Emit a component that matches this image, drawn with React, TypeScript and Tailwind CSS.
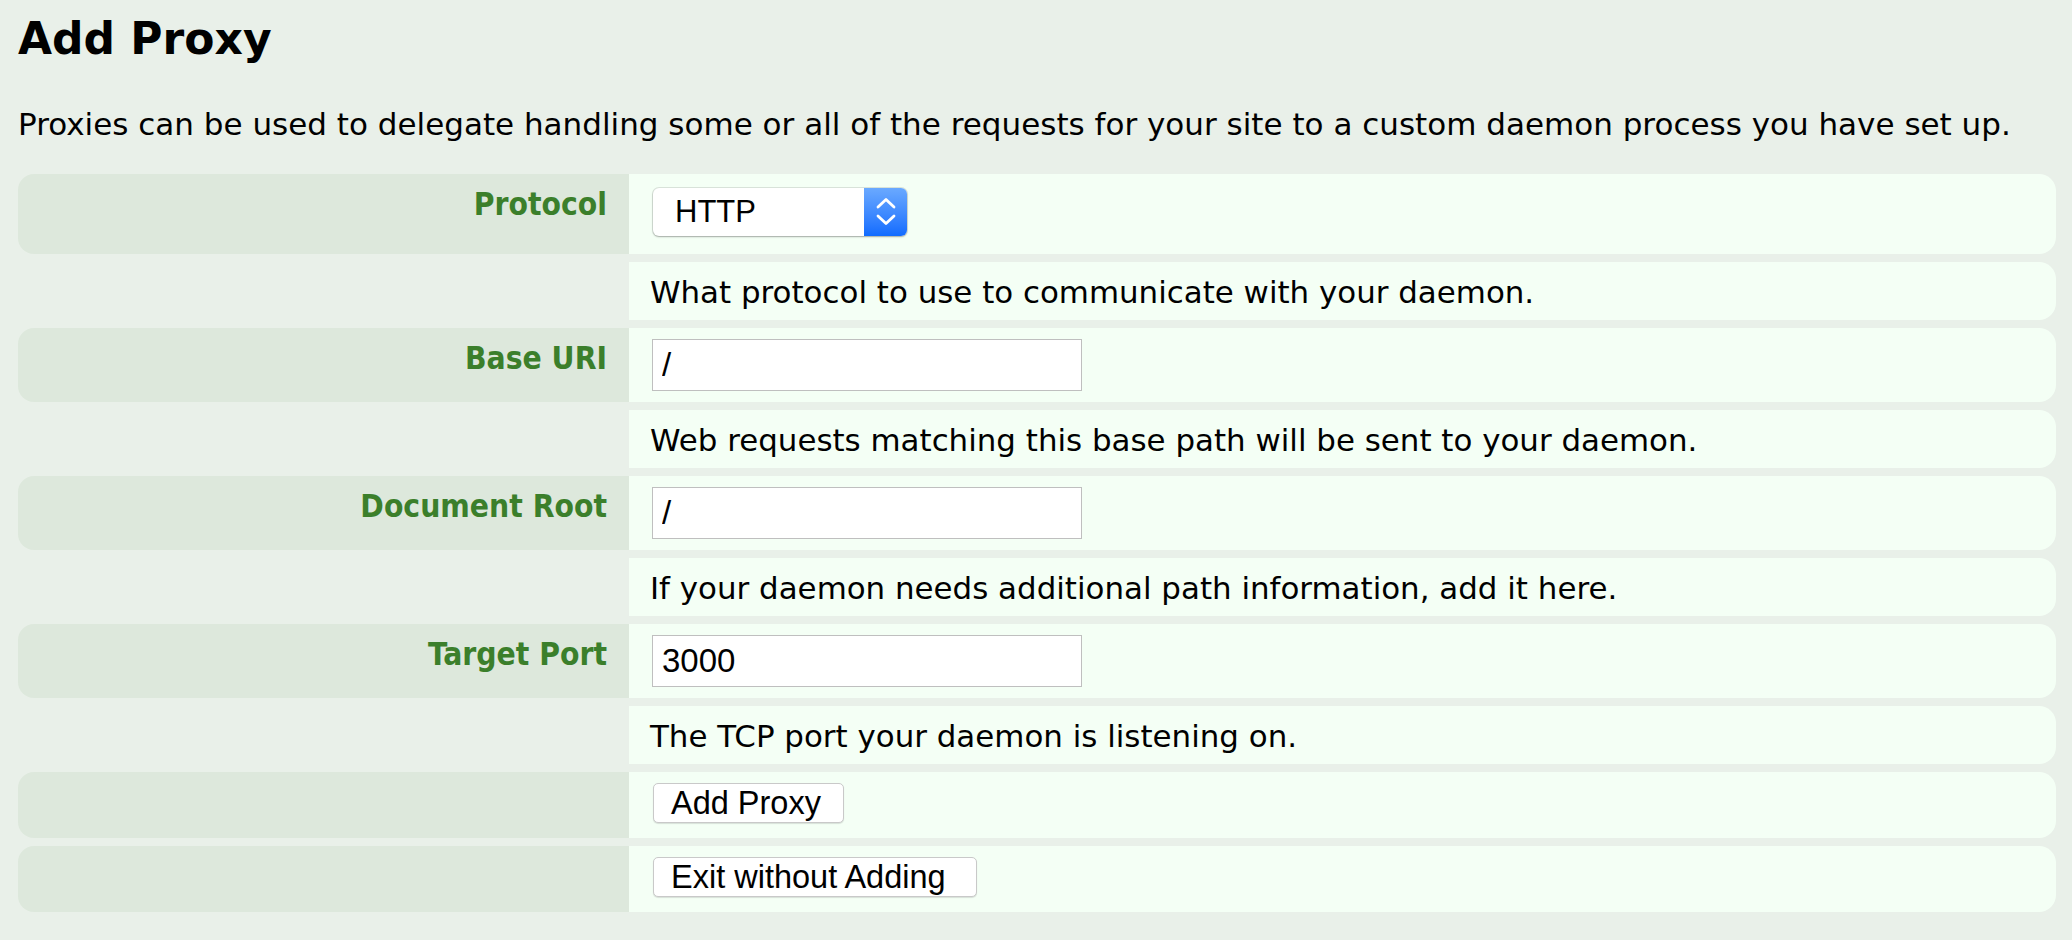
import React from "react";

function LabelCell({ label }: { label?: string }) {
  if (!label && label !== "") {
    return <div className="w-[611px] shrink-0" />;
  }
  return (
    <div className="w-[611px] shrink-0 rounded-l-[16px] bg-[#dde8dc] pr-[22px] pt-[12px] text-right font-['DejaVu_Sans_Condensed','DejaVu_Sans',sans-serif] text-[31.5px] font-bold leading-[36px] text-[#3b7f2b] [font-stretch:condensed]">
      {label}
    </div>
  );
}

function ValueCell({ children, pt }: { children: React.ReactNode; pt: string }) {
  return <div className={`flex-1 rounded-r-[17px] bg-[#f4fff5] pl-[21px] ${pt}`}>{children}</div>;
}

function DescRow({ text }: { text: string }) {
  return (
    <div className="flex h-[58px]">
      <LabelCell />
      <ValueCell pt="pt-[12px]">
        <div className="text-[30.9px] leading-[36px]">{text}</div>
      </ValueCell>
    </div>
  );
}

function TextInput({ value }: { value: string }) {
  return (
    <input
      readOnly
      value={value}
      className="ml-[2px] block h-[52px] w-[430px] border border-[#bfbfbf] bg-white pl-[9px] font-['Liberation_Sans',sans-serif] text-[33px] text-black outline-none"
    />
  );
}

function InputRow({ label, value }: { label: string; value: string }) {
  return (
    <div className="flex h-[74px]">
      <LabelCell label={label} />
      <ValueCell pt="pt-[11px]">
        <TextInput value={value} />
      </ValueCell>
    </div>
  );
}

function MacButton({ text, w }: { text: string; w: string }) {
  return (
    <button
      className={`ml-[3px] block h-[40px] ${w} rounded-[5px] border border-[#c9c9c9] bg-white pl-[17px] text-left font-['Liberation_Sans',sans-serif] text-[32.5px] leading-[36px] text-black shadow-[0_1px_1px_rgba(0,0,0,0.12)]`}
    >
      {text}
    </button>
  );
}

function ButtonRow({ text, w }: { text: string; w: string }) {
  return (
    <div className="flex h-[66px]">
      <LabelCell label="" />
      <ValueCell pt="pt-[11px]">
        <MacButton text={text} w={w} />
      </ValueCell>
    </div>
  );
}

function MacSelect() {
  return (
    <div className="ml-[3px] flex h-[48px] w-[254px] overflow-hidden rounded-[6px] bg-white shadow-[0_0_0_1px_rgba(0,0,0,0.1),0_1px_2px_rgba(0,0,0,0.25)]">
      <div className="flex-1 pl-[22px] font-['Liberation_Sans',sans-serif] text-[31px] leading-[48px] text-black">
        HTTP
      </div>
      <div className="flex w-[43px] items-center justify-center bg-gradient-to-b from-[#6aa9ff] to-[#0f6bff]">
        <svg width="22" height="30" viewBox="0 0 22 30" fill="none">
          <path d="M3 10 L11 2.5 L19 10" stroke="white" strokeWidth="2.8" strokeLinecap="round" strokeLinejoin="round" />
          <path d="M3 19 L11 26.5 L19 19" stroke="white" strokeWidth="2.8" strokeLinecap="round" strokeLinejoin="round" />
        </svg>
      </div>
    </div>
  );
}

export default function App() {
  return (
    <div className="min-h-[940px] bg-[#e9f0e9] pl-[18px] pr-[16px] pt-[13px] font-['DejaVu_Sans',sans-serif] text-black">
      <h1 className="text-[44px] font-bold leading-[52px]">Add Proxy</h1>
      <p className="mt-[41px] text-[31px] leading-[36px]">
        Proxies can be used to delegate handling some or all of the requests for your site to a custom daemon process you have set up.
      </p>
      <div className="mt-[32px] flex flex-col gap-[8px]">
        <div className="flex h-[80px]">
          <LabelCell label="Protocol" />
          <ValueCell pt="pt-[14px]">
            <MacSelect />
          </ValueCell>
        </div>
        <DescRow text="What protocol to use to communicate with your daemon." />
        <InputRow label="Base URI" value="/" />
        <DescRow text="Web requests matching this base path will be sent to your daemon." />
        <InputRow label="Document Root" value="/" />
        <DescRow text="If your daemon needs additional path information, add it here." />
        <InputRow label="Target Port" value="3000" />
        <DescRow text="The TCP port your daemon is listening on." />
        <ButtonRow text="Add Proxy" w="w-[191px]" />
        <ButtonRow text="Exit without Adding" w="w-[324px]" />
      </div>
    </div>
  );
}
